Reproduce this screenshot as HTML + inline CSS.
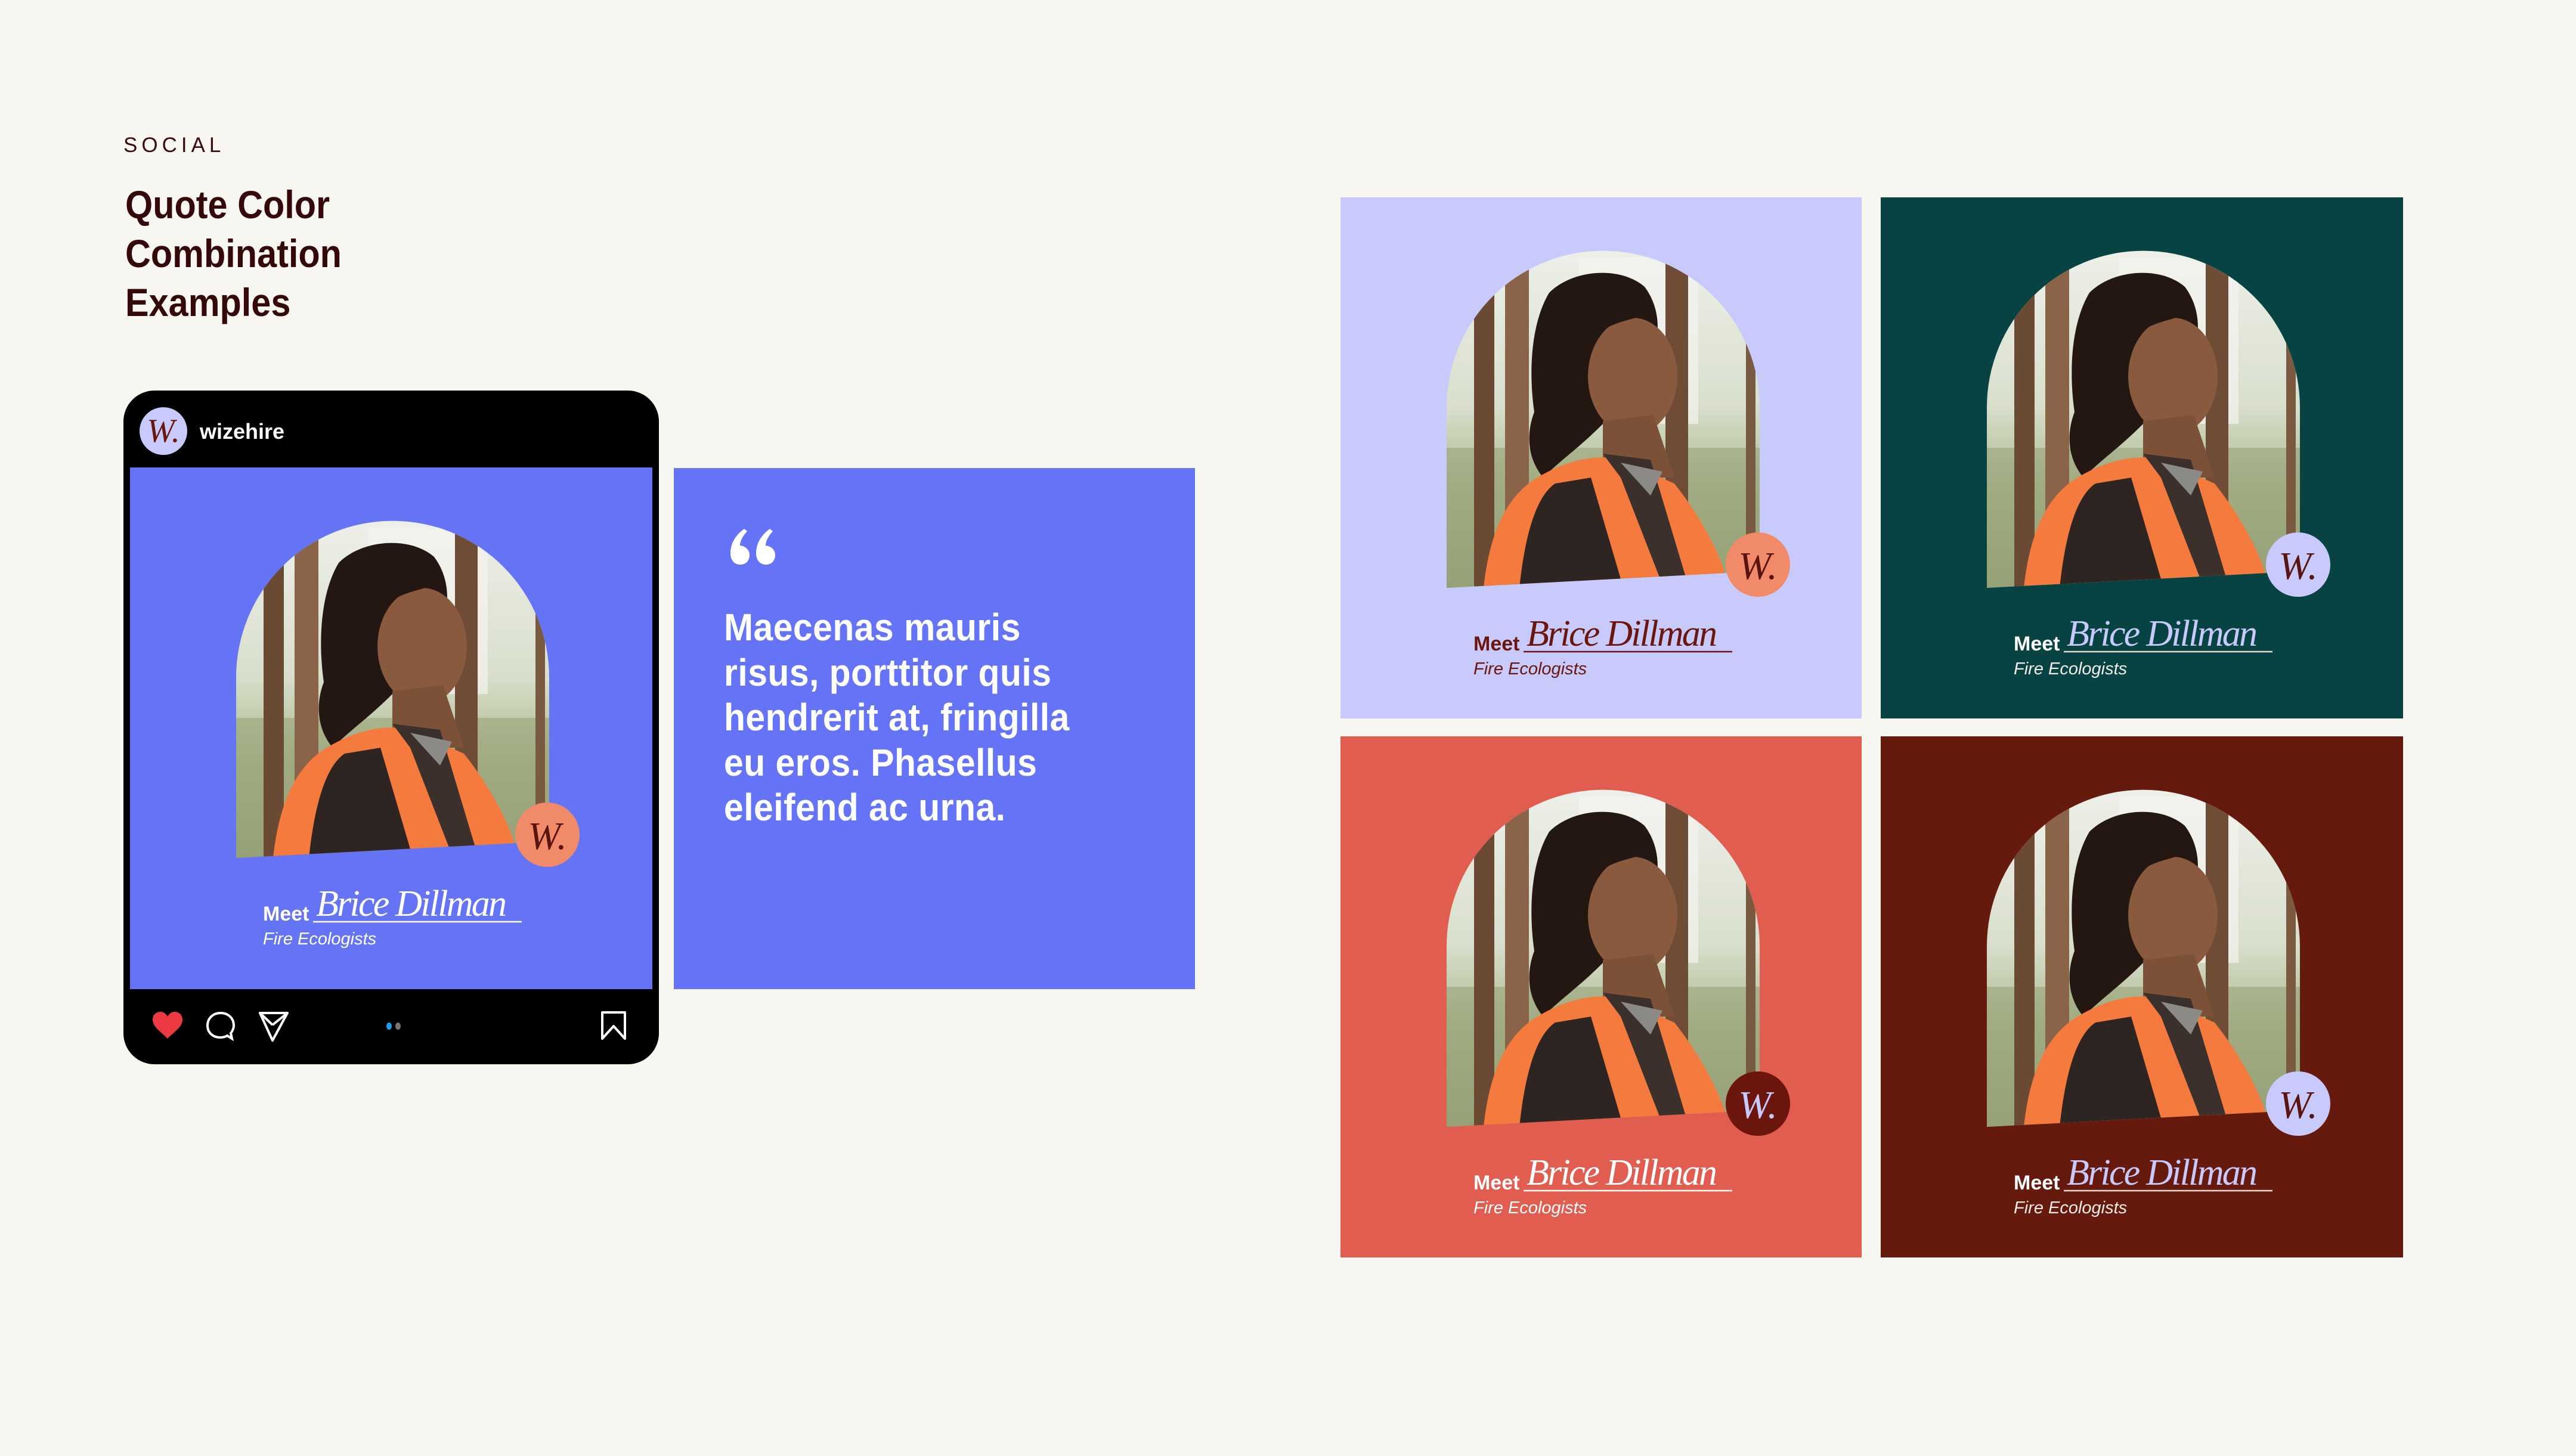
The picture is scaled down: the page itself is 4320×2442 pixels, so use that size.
<!DOCTYPE html>
<html><head><meta charset="utf-8"><style>
html,body{margin:0;padding:0}
body{width:4320px;height:2442px;background:#f8f6f1;position:relative;overflow:hidden;font-family:"Liberation Sans",sans-serif}
.abs{position:absolute}
.social{left:207px;top:224px;font-size:35px;letter-spacing:7px;color:#3a0c0c}
.title{left:210px;top:302px;font-size:66px;line-height:82px;color:#350909;font-weight:bold;transform:scaleX(.9);transform-origin:left;white-space:nowrap}
.phone{left:207px;top:655px;width:898px;height:1130px;background:#000;border-radius:52px}
.card{width:876px;height:876px}
.card svg{display:block}
.quote{left:1130px;top:785px;width:874px;height:874px;background:#6574f6}
.qt{left:84px;top:230px;color:#fff;font-size:64px;line-height:75.5px;font-weight:bold;transform:scaleX(.92);transform-origin:left;white-space:nowrap;letter-spacing:.5px}
</style></head><body>
<svg width="0" height="0" style="position:absolute">
<defs>
<clipPath id="arch"><path d="M178,655 L178,352 A262.5,262.5 0 0 1 703,352 L703,627 Z"/></clipPath>
<linearGradient id="sky" x1="0" y1="0" x2="0" y2="1"><stop offset="0" stop-color="#eef0ea"/><stop offset=".45" stop-color="#d9dfcc"/><stop offset=".7" stop-color="#a9b58a"/><stop offset="1" stop-color="#8f9a70"/></linearGradient>
<symbol id="photo" viewBox="0 0 876 876">
<g clip-path="url(#arch)">
<rect x="170" y="80" width="540" height="600" fill="url(#sky)"/>
<rect x="400" y="100" width="200" height="280" fill="#f4f4ef" opacity=".7"/>
<rect x="178" y="420" width="525" height="240" fill="#9aa47a" opacity=".6"/>
<rect x="224" y="150" width="34" height="520" fill="#6b4a34"/>
<rect x="276" y="110" width="40" height="560" fill="#8a6448"/>
<rect x="545" y="100" width="38" height="560" fill="#6e4c36"/>
<rect x="680" y="230" width="16" height="420" fill="#7a5a40"/>
<path d="M350,160 C390,120 470,115 510,150 C540,190 535,240 520,270 L440,380 C400,420 370,440 340,470 C315,440 310,400 325,360 C315,290 320,210 350,160Z" fill="#241712"/>
<ellipse cx="490" cy="300" rx="75" ry="98" fill="#8a5a3e"/>
<path d="M415,250 C425,195 470,175 520,190 C500,205 470,205 445,220 C430,230 420,245 415,250Z" fill="#241712"/>
<path d="M440,375 L525,365 L560,470 L440,470Z" fill="#7d5038"/>
<path d="M240,655 C250,560 280,500 330,470 C380,440 430,430 470,440 L560,480 C600,530 640,600 650,650 Z" fill="#f47b3d"/>
<path d="M300,655 C310,560 330,500 360,480 L420,470 L470,640 L470,655Z" fill="#2e2422"/>
<path d="M440,430 L520,440 L580,640 L540,650 L470,470Z" fill="#3b302c"/>
<path d="M470,445 L540,460 L520,500Z" fill="#8c8a86"/>
</g>
</symbol>
</defs>
</svg>

<div class="abs social">SOCIAL</div>
<div class="abs title">Quote Color<br>Combination<br>Examples</div>

<div class="abs phone">
  <div class="abs" style="left:27px;top:28px;width:80px;height:80px;border-radius:50%;background:#c8cafb;color:#6a160d;font-family:'Liberation Serif',serif;font-style:italic;font-size:56px;line-height:80px;text-align:center">W.</div>
  <div class="abs" style="left:128px;top:48px;color:#fff;font-size:36px;font-weight:bold">wizehire</div>
  <svg class="abs" style="left:46px;top:1040px" width="56" height="50" viewBox="0 0 56 50"><path d="M28,47 C18,36 3,28 3,15 C3,6 10,2 16,2 C22,2 26,6 28,10 C30,6 34,2 40,2 C46,2 53,6 53,15 C53,28 38,36 28,47Z" fill="#ec3942"/></svg>
  <svg class="abs" style="left:137px;top:1040px" width="52" height="52" viewBox="0 0 52 52"><path d="M26,4 C13,4 4,13 4,25 C4,37 13,45 25,45 C30,45 34,44 37,42 L45,47 L43,38 C46,34 48,30 48,25 C48,13 39,4 26,4Z" fill="none" stroke="#fff" stroke-width="4"/></svg>
  <svg class="abs" style="left:226px;top:1040px" width="52" height="52" viewBox="0 0 52 52"><path d="M3,4 L49,4 L24,50 Z M3,4 L24,24 M49,4 L24,24" fill="none" stroke="#fff" stroke-width="4" stroke-linejoin="round"/></svg>
  <div class="abs" style="left:441px;top:1060px;width:9px;height:12px;border-radius:50%;background:#1a9ef0"></div>
  <div class="abs" style="left:456px;top:1060px;width:9px;height:12px;border-radius:50%;background:#777"></div>
  <svg class="abs" style="left:800px;top:1040px" width="44" height="50" viewBox="0 0 44 50"><path d="M3,3 L41,3 L41,47 L22,26 L3,47 Z" fill="none" stroke="#fff" stroke-width="4" stroke-linejoin="round"/></svg>
</div>

<div class="abs card" style="left:218px;top:784px;background:#6474f5;height:875px">
<svg width="876" height="876"><use href="#photo" width="876" height="876"/>
<circle cx="700" cy="616" r="54" fill="#f08a68"/>
<text x="700" y="640" text-anchor="middle" font-family="Liberation Serif" font-style="italic" font-size="66" fill="#5a1410">W.</text>
<text x="223" y="760" font-family="Liberation Sans" font-weight="bold" font-size="34" fill="#fff">Meet</text>
<text x="312" y="752" font-family="Liberation Serif" font-style="italic" font-size="62" fill="#fff" textLength="320">Brice Dillman</text>
<line x1="307" y1="762" x2="657" y2="762" stroke="#fff" stroke-width="2.5"/>
<text x="223" y="800" font-family="Liberation Sans" font-style="italic" font-size="29" fill="#fff">Fire Ecologists</text>
</svg></div>

<div class="abs quote">
<svg class="abs" style="left:92px;top:98px" width="80" height="64" viewBox="0 0 80 64"><path d="M20,64 C9,64 3,56 3,45 C3,28 12,14 26,4 L31,8 C22,18 19,26 19,32 C29,33 35,40 35,48 C35,57 29,64 20,64Z M63,64 C52,64 46,56 46,45 C46,28 55,14 69,4 L74,8 C65,18 62,26 62,32 C72,33 78,40 78,48 C78,57 72,64 63,64Z" fill="#fff"/></svg>
<div class="abs qt">Maecenas mauris<br>risus, porttitor quis<br>hendrerit at, fringilla<br>eu eros. Phasellus<br>eleifend ac urna.</div>
</div>

<div class="abs card" style="left:2248px;top:331px;background:#c8cafb;width:874px;height:874px">
<svg width="876" height="876"><use href="#photo" width="876" height="876"/>
<circle cx="700" cy="616" r="54" fill="#f08a68"/>
<text x="700" y="640" text-anchor="middle" font-family="Liberation Serif" font-style="italic" font-size="66" fill="#5a1410">W.</text>
<text x="223" y="760" font-family="Liberation Sans" font-weight="bold" font-size="34" fill="#6a160d">Meet</text>
<text x="312" y="752" font-family="Liberation Serif" font-style="italic" font-size="62" fill="#6a160d" textLength="320">Brice Dillman</text>
<line x1="307" y1="762" x2="657" y2="762" stroke="#6a160d" stroke-width="2.5"/>
<text x="223" y="800" font-family="Liberation Sans" font-style="italic" font-size="29" fill="#6a160d">Fire Ecologists</text>
</svg></div>

<div class="abs card" style="left:3154px;top:331px;background:#074343;width:876px;height:874px">
<svg width="876" height="876"><use href="#photo" width="876" height="876"/>
<circle cx="700" cy="616" r="54" fill="#c8cafb"/>
<text x="700" y="640" text-anchor="middle" font-family="Liberation Serif" font-style="italic" font-size="66" fill="#5a1410">W.</text>
<text x="223" y="760" font-family="Liberation Sans" font-weight="bold" font-size="34" fill="#fff">Meet</text>
<text x="312" y="752" font-family="Liberation Serif" font-style="italic" font-size="62" fill="#c8cafb" textLength="320">Brice Dillman</text>
<line x1="307" y1="762" x2="657" y2="762" stroke="#e8d8d0" stroke-width="2.5"/>
<text x="223" y="800" font-family="Liberation Sans" font-style="italic" font-size="29" fill="#f3ece6">Fire Ecologists</text>
</svg></div>

<div class="abs card" style="left:2248px;top:1235px;background:#e05d50;width:874px;height:874px">
<svg width="876" height="876"><use href="#photo" width="876" height="876"/>
<circle cx="700" cy="616" r="54" fill="#6a160d"/>
<text x="700" y="640" text-anchor="middle" font-family="Liberation Serif" font-style="italic" font-size="66" fill="#c8cafb">W.</text>
<text x="223" y="760" font-family="Liberation Sans" font-weight="bold" font-size="34" fill="#fff">Meet</text>
<text x="312" y="752" font-family="Liberation Serif" font-style="italic" font-size="62" fill="#fff" textLength="320">Brice Dillman</text>
<line x1="307" y1="762" x2="657" y2="762" stroke="#fff" stroke-width="2.5"/>
<text x="223" y="800" font-family="Liberation Sans" font-style="italic" font-size="29" fill="#fff">Fire Ecologists</text>
</svg></div>

<div class="abs card" style="left:3154px;top:1235px;background:#661a0e;width:876px;height:874px">
<svg width="876" height="876"><use href="#photo" width="876" height="876"/>
<circle cx="700" cy="616" r="54" fill="#c8cafb"/>
<text x="700" y="640" text-anchor="middle" font-family="Liberation Serif" font-style="italic" font-size="66" fill="#5a1410">W.</text>
<text x="223" y="760" font-family="Liberation Sans" font-weight="bold" font-size="34" fill="#fff">Meet</text>
<text x="312" y="752" font-family="Liberation Serif" font-style="italic" font-size="62" fill="#c8cafb" textLength="320">Brice Dillman</text>
<line x1="307" y1="762" x2="657" y2="762" stroke="#e8d8d0" stroke-width="2.5"/>
<text x="223" y="800" font-family="Liberation Sans" font-style="italic" font-size="29" fill="#f3ece6">Fire Ecologists</text>
</svg></div>
</body></html>
